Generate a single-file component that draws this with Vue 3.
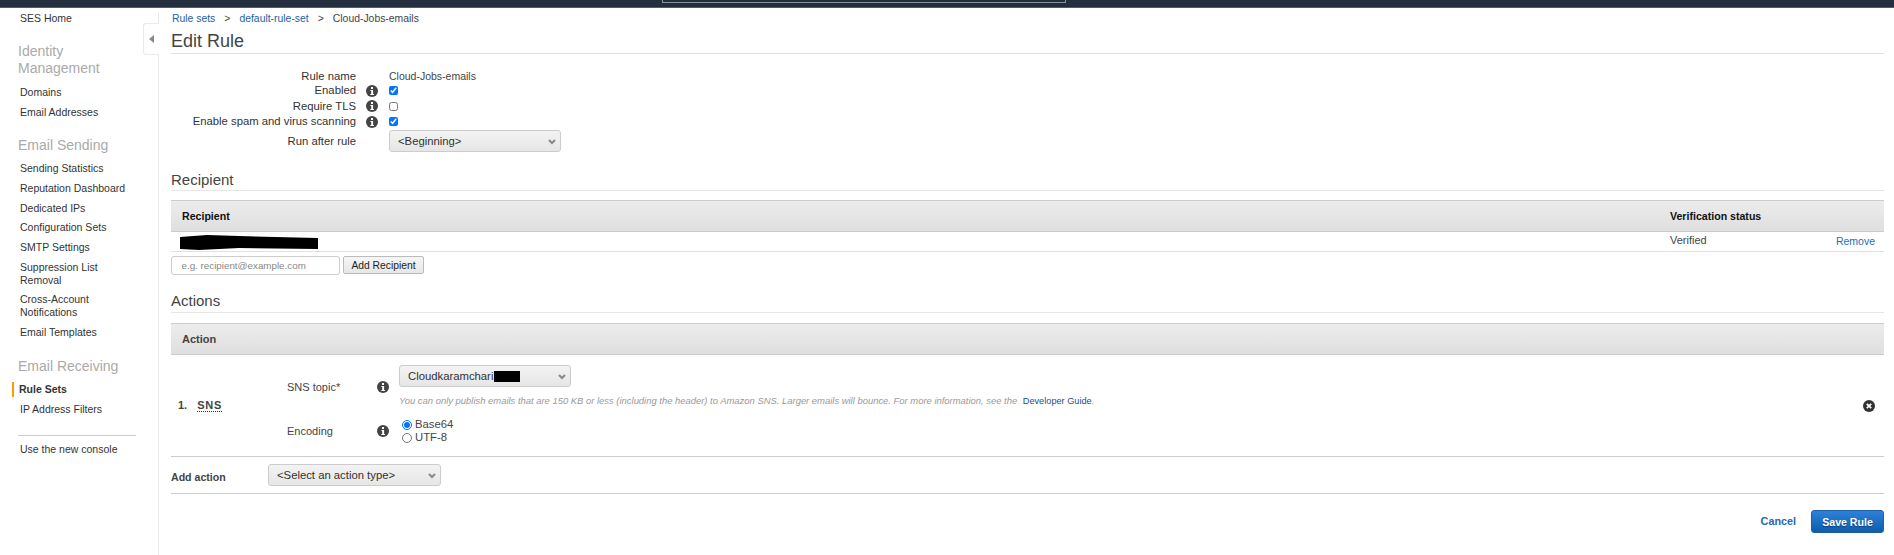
<script setup>
const groups = [
  { title: ['Identity', 'Management'], items: ['Domains', 'Email Addresses'] },
  { title: ['Email Sending'], items: ['Sending Statistics', 'Reputation Dashboard', 'Dedicated IPs', 'Configuration Sets', 'SMTP Settings', 'Suppression List Removal', 'Cross-Account Notifications', 'Email Templates'] },
  { title: ['Email Receiving'], items: ['Rule Sets', 'IP Address Filters'] },
]
const infoPath = 'M6 0a6 6 0 1 0 0 12A6 6 0 0 0 6 0z'
</script>

<template>
  <div class="page">
    <header class="topbar"><div class="search"></div></header>
    <div class="body">
      <aside class="side">
        <a class="nav home">SES Home</a>
        <section v-for="g in groups" :key="g.title[0]">
          <h3><span v-for="t in g.title" :key="t">{{ t }}</span></h3>
          <a v-for="i in g.items" :key="i" class="nav" :class="{ active: i === 'Rule Sets' }">{{ i }}</a>
        </section>
        <hr class="div" />
        <a class="nav last">Use the new console</a>
        <div class="tab"><i></i></div>
      </aside>
      <main class="main">
        <nav class="crumb">
          <a>Rule sets</a><span class="sep">&gt;</span><a>default-rule-set</a><span class="sep">&gt;</span><span>Cloud-Jobs-emails</span>
        </nav>
        <h1>Edit Rule</h1>
        <div class="form">
          <label>Rule name</label><span></span><span class="val">Cloud-Jobs-emails</span>
          <label>Enabled</label>
          <svg class="info" viewBox="0 0 12 12"><path :d="infoPath" fill="#444"/><rect x="5" y="2" width="2" height="2" fill="#fff"/><path d="M4.4 5h2.7v4h.8v1H4.3V9h.9V6h-.8z" fill="#fff"/></svg>
          <input class="chk" type="checkbox" checked />
          <label>Require TLS</label>
          <svg class="info" viewBox="0 0 12 12"><path :d="infoPath" fill="#444"/><rect x="5" y="2" width="2" height="2" fill="#fff"/><path d="M4.4 5h2.7v4h.8v1H4.3V9h.9V6h-.8z" fill="#fff"/></svg>
          <input class="chk" type="checkbox" />
          <label>Enable spam and virus scanning</label>
          <svg class="info" viewBox="0 0 12 12"><path :d="infoPath" fill="#444"/><rect x="5" y="2" width="2" height="2" fill="#fff"/><path d="M4.4 5h2.7v4h.8v1H4.3V9h.9V6h-.8z" fill="#fff"/></svg>
          <input class="chk" type="checkbox" checked />
          <label>Run after rule</label><span></span>
          <div class="sel run"><span>&lt;Beginning&gt;</span><svg class="chev" viewBox="0 0 8 6"><path d="M1 1l3 3 3-3" fill="none" stroke="#888" stroke-width="2"/></svg></div>
        </div>

        <h2 class="h-rec">Recipient</h2>
        <div class="thead rec"><span>Recipient</span><span>Verification status</span></div>
        <div class="trow rec">
          <span><svg class="scrib" viewBox="0 0 140 16"><path d="M1 3 L28 1 L60 2 L139 4 L139 15 L60 14 L20 16 L1 15z" fill="#000"/></svg></span>
          <span class="ver">Verified</span>
          <a class="remove">Remove</a>
        </div>
        <div class="add">
          <input class="txt" placeholder="e.g. recipient@example.com" />
          <button class="btn">Add Recipient</button>
        </div>

        <h2 class="h-act">Actions</h2>
        <div class="thead act"><span>Action</span></div>
        <div class="arow">
          <div class="num"><b>1.</b><b class="sns">SNS</b></div>
          <div class="agrid">
            <label class="first">SNS topic*</label>
            <svg class="info first" viewBox="0 0 12 12"><path :d="infoPath" fill="#444"/><rect x="5" y="2" width="2" height="2" fill="#fff"/><path d="M4.4 5h2.7v4h.8v1H4.3V9h.9V6h-.8z" fill="#fff"/></svg>
            <div>
              <div class="sel topic"><span>Cloudkaramchari</span><i class="mask"></i><svg class="chev" viewBox="0 0 8 6"><path d="M1 1l3 3 3-3" fill="none" stroke="#888" stroke-width="2"/></svg></div>
              <p class="hint">You can only publish emails that are 150 KB or less (including the header) to Amazon SNS. Larger emails will bounce. For more information, see the <a>Developer Guide</a>.</p>
            </div>
            <label>Encoding</label>
            <svg class="info" viewBox="0 0 12 12"><path :d="infoPath" fill="#444"/><rect x="5" y="2" width="2" height="2" fill="#fff"/><path d="M4.4 5h2.7v4h.8v1H4.3V9h.9V6h-.8z" fill="#fff"/></svg>
            <div class="radios">
              <div><input type="radio" name="enc" checked /><span>Base64</span></div>
              <div><input type="radio" name="enc" /><span>UTF-8</span></div>
            </div>
          </div>
          <svg class="close" viewBox="0 0 12 12"><circle cx="6" cy="6" r="6" fill="#333"/><path d="M3.8 3.8l4.4 4.4M8.2 3.8L3.8 8.2" stroke="#fff" stroke-width="1.8"/></svg>
        </div>
        <div class="addact">
          <label>Add action</label>
          <div class="sel type"><span>&lt;Select an action type&gt;</span><svg class="chev" viewBox="0 0 8 6"><path d="M1 1l3 3 3-3" fill="none" stroke="#888" stroke-width="2"/></svg></div>
        </div>
        <div class="foot">
          <a class="cancel">Cancel</a>
          <button class="save">Save Rule</button>
        </div>
      </main>
    </div>
  </div>
</template>

<style>
html, body { margin: 0; background: #fff; }
</style>

<style scoped>
.page { width: 1894px; height: 555px; overflow: hidden; font: 11px/13px "Liberation Sans", Arial, sans-serif; color: #444; background: #fff; }
.topbar { height: 7px; background: #232f3e; border-bottom: 1px solid #545b64; display: flex; }
.search { width: 402px; height: 2px; margin-left: 662px; border: 1px solid #879596; border-top: 0; }
.body { display: flex; }
.side { position: relative; width: 158px; margin-top: 4px; height: 543px; flex: none; border-right: 1px solid #eaeaea; font-size: 10.5px; }
.nav { display: block; padding: 3.35px 28px 3.35px 20px; color: #333; position: relative; }
.home { padding-top: 0; }
.side h3 { margin: 15.15px 0 5px 18px; font: 400 14px/17px "Liberation Sans", Arial, sans-serif; color: #aaa; }
.side h3 span { display: block; }
.nav.active { font-weight: 700; padding-left: 19px; color: #333; }
.nav.active::before { content: ""; position: absolute; left: 12px; top: 2px; width: 2px; height: 15px; background: #f90; }
.div { margin: 15.65px 22px 4px 18px; border: 0; border-top: 1px solid #ccc; }
.tab { position: absolute; left: 143px; top: 11px; width: 15px; height: 30px; border: 1px solid #eaeaea; border-right: 0; border-radius: 3px 0 0 3px; background: #fff; display: flex; align-items: center; justify-content: center; }
.tab i { border: 4px solid transparent; border-right: 5px solid #888; border-left: 0; }
.main { flex: 1; padding: 4px 10px 0 12px; min-width: 0; }
.crumb { height: 13px; margin-left: 1px; font-size: 10.4px; }
.crumb a { color: #1a5fa8; }
.sep { margin: 0 9px; }
.crumb span:last-child { color: #444; }
h1 { margin: 4px 0 0; font: 400 18px/24px "Liberation Sans", Arial, sans-serif; color: #444; border-bottom: 1px solid #e1e1e1; }
.form { display: grid; grid-template-columns: 185px 33px 1fr; grid-template-rows: 14px 15px 16px 15px 24px; margin-top: 15px; align-items: center; font-size: 11.3px; }
.form label { text-align: right; color: #333; }
.val { font-size: 10.5px; }
.info { width: 12px; height: 12px; margin-left: 10px; }
.chk { width: 9px; height: 9px; margin: 0; accent-color: #0075ff; }
.sel { box-sizing: border-box; display: flex; align-items: center; height: 22px; padding-left: 8px; border: 1px solid #ccc; border-radius: 3px; background: linear-gradient(#f3f3f3, #e6e6e6); color: #333; position: relative; font-size: 11.3px; }
.chev { position: absolute; right: 4px; top: 8px; width: 8px; height: 6px; }
.run { width: 172px; }
h2 { margin: 0; font: 400 15px/18px "Liberation Sans", Arial, sans-serif; color: #444; border-bottom: 1px solid #e6e6e6; padding-bottom: 1px; }
.h-rec { margin-top: 18px; }
.h-act { margin-top: 17px; padding-bottom: 2px; }
.thead { box-sizing: border-box; height: 32px; display: grid; align-items: center; border-top: 1px solid #ccc; border-bottom: 1px solid #ccc; background: linear-gradient(#ececec, #dfdfdf); padding-left: 11px; font-weight: 700; }
.thead.rec { margin-top: 9px; color: #111; grid-template-columns: 1488px 1fr; font-size: 10.6px; }
.thead.act { margin-top: 10px; }
.trow { box-sizing: border-box; height: 20px; display: grid; grid-template-columns: 1499px 1fr auto; align-items: center; border-bottom: 1px solid #e1e1e1; padding-right: 9px; }
.scrib { display: block; width: 140px; height: 16px; margin: 0 0 0 8px; }
.ver { margin-top: -2px; }
.remove { color: #1a6fb5; font-size: 10.5px; }
.add { display: flex; margin-top: 4px; }
.txt { box-sizing: border-box; width: 169px; height: 19px; padding: 0 9.5px; border: 1px solid #ccc; border-radius: 3px; font: 9.8px "Liberation Sans", Arial, sans-serif; }
.txt::placeholder { color: #888; }
.btn { box-sizing: border-box; width: 81px; height: 18px; margin-left: 3px; padding: 0; border: 1px solid #bbb; border-radius: 2px; background: linear-gradient(#f6f6f6, #e6e6e6); color: #222; font: 400 10.3px "Liberation Sans", Arial, sans-serif; }
.arow { display: flex; align-items: center; height: 102px; box-sizing: border-box; border-bottom: 1px solid #ccc; }
.num { width: 116px; flex: none; display: flex; padding-left: 7px; box-sizing: border-box; }
.sns { margin-left: 10px; border-bottom: 1px dotted #333; letter-spacing: .8px; line-height: 12px; }
.agrid { display: grid; grid-template-columns: 90px 13px auto; row-gap: 11px; align-items: center; flex: 1; margin-top: -2px; }
.agrid .first { margin-top: 2px; }
.agrid .info { margin-left: 0; }
.topic { width: 172px; margin-left: 9px; height: 22px; }
.mask { display: block; width: 26px; height: 11px; background: #000; margin-left: 1px; }
.hint { margin: 8px 0 0 9px; font: italic 9.43px/12px "Liberation Sans", Arial, sans-serif; color: #999; white-space: nowrap; }
.hint a { color: #1b4f91; font-style: normal; font-size: 9.2px; margin-left: 3px; }
.radios { margin-left: 9px; }
.radios div { display: flex; align-items: center; height: 13px; }
.radios input { width: 10px; height: 10px; margin: 0 3px 0 3px; }
.radios span { font-size: 11.3px; }
.close { width: 12px; height: 12px; flex: none; margin-right: 9px; }
.addact { box-sizing: border-box; height: 37px; display: flex; align-items: center; border-bottom: 1px solid #ccc; }
.addact label { width: 97px; font-weight: 700; font-size: 10.6px; padding-top: 4px; }
.type { width: 173px; }
.foot { display: flex; align-items: center; justify-content: flex-end; margin-top: 16px; }
.cancel { color: #2468b4; font-weight: 700; margin-right: 15px; font-size: 10.8px; }
.save { box-sizing: border-box; width: 73px; height: 23px; padding: 0; border: 1px solid #1a5fa8; border-radius: 3px; background: linear-gradient(#2d82d9, #0f5cac); color: #fff; font: 700 10.6px "Liberation Sans", Arial, sans-serif; text-shadow: 0 1px 1px #0a3f7a; }
</style>
